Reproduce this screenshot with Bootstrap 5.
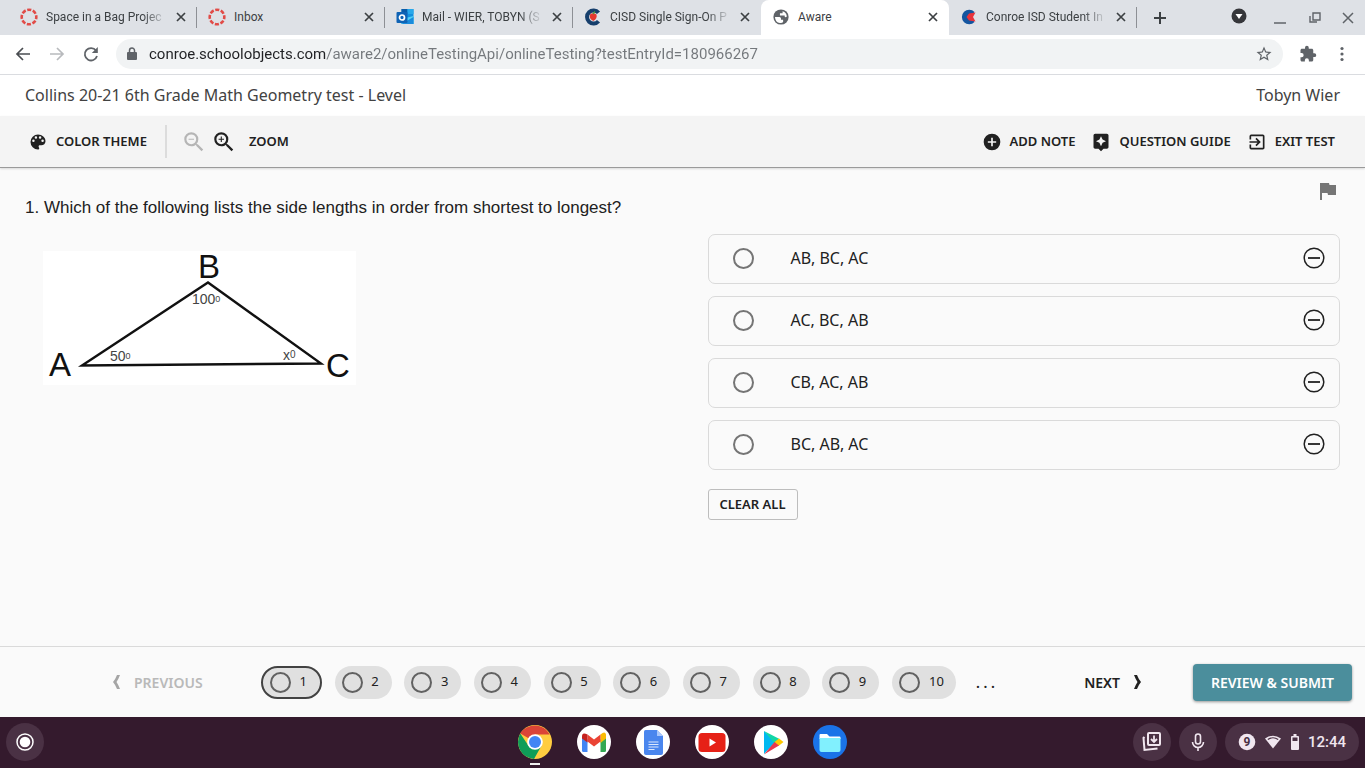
<!DOCTYPE html>
<html lang="en">
<head>
<meta charset="utf-8">
<meta name="viewport" content="width=device-width, initial-scale=1">
<title>Aware</title>
<link href="https://cdn.jsdelivr.net/npm/bootstrap@5.3.0/dist/css/bootstrap.min.css" rel="stylesheet">
<style>
  body { font-family: "Noto Sans", sans-serif; background: #fafafa; color: #212121; }
  svg { flex: none; display: block; }
  .bare { background: none; border: 0; padding: 0; color: inherit; font-weight: inherit; display: inline-flex; align-items: center; justify-content: center; text-decoration: none; }

  /* browser frame */
  .tabstrip { background: #dee1e6; height: 35px; padding-left: 9px; font: 12px/16px Roboto, sans-serif; color: #3c4043; }
  .tab { flex: 0 1 188px; min-width: 0; padding: 0 8px 2px 11px; position: relative; }
  .tab.split::after { content: ""; position: absolute; right: 0; top: 7px; bottom: 7px; width: 1px; background: #8d9095; }
  .tab.active { background: #fff; border-radius: 8px 8px 0 0; }
  .tab-title { flex: 1 1 0; min-width: 0; margin: 0 4px 0 8px; overflow: hidden; white-space: nowrap; color: inherit; text-decoration: none; }
  .tab-title.fade-end { -webkit-mask-image: linear-gradient(to right, #000 calc(100% - 26px), transparent calc(100% - 2px)); mask-image: linear-gradient(to right, #000 calc(100% - 26px), transparent calc(100% - 2px)); }
  .window-controls { padding: 0 11px 4px 0; }
  .urlbar { background: #fff; height: 40px; border-bottom: 1px solid #dadce0; padding: 0 14px 2px 14px; color: #5f6368; }
  .address { background: #f1f3f4; height: 30px; border-radius: 15px; padding: 0 10px 0 9px; }
  .address input { border: 0; outline: 0; padding: 0; margin-left: 10px; font: 15px/20px Roboto, sans-serif;
    background: linear-gradient(to right, #202124 177px, #74787c 177px); -webkit-background-clip: text; background-clip: text; -webkit-text-fill-color: transparent; }

  /* test header */
  .title-row { background: #fff; height: 41px; padding: 0 25px 2px; font-size: 16px; color: #424242; }
  .tools { background: #f4f4f4; height: 52px; padding: 0 30px 0 28px; border-bottom: 1px solid #9a9a9a; box-shadow: 0 1px 2px #0002; font-size: 13px; font-weight: 600; position: relative; }
  .tools .bare { gap: 8px; }
  .rule-v { width: 2px; height: 33px; background: #dcdcdc; margin: 0 14px 0 18px; }

  /* question */
  .question { padding: 0 25px; }
  .prompt { font: 17px/24px "Liberation Sans", Arial, sans-serif; margin: 28px 0 31px; }
  .figure-box { margin-left: 18px; overflow: visible; }
  .answers { padding: 12px 0 0 25px; }
  .choices { margin-top: 30px; gap: 12px; border: 0; padding: 0; }
  .choice { height: 50px; border: 1px solid #dadada; border-radius: 7px; padding: 0 14px 2px 24px; font-size: 16px; }
  .choice input { appearance: none; width: 21px; height: 21px; margin: 0; border: 2px solid #757575; border-radius: 50%; }
  .choice input:checked { background: #757575; }
  .choice label { margin-left: 37px; }
  .clear { height: 31px; margin-top: 19px; width: 90px; border: 1px solid #bdbdbd; border-radius: 3px; background: #fafafa; color: #212121; font-size: 13px; font-weight: 600; padding: 0; }

  /* pager */
  .pager { height: 71px; border-top: 1px solid #dadada; padding: 0 13px 0 112px; font-size: 14px; font-weight: 600; }
  .step-move { gap: 13px; }
  .step-move.previous { width: 94px; color: #b9b9b9; justify-content: flex-start; }
  .step-move.next { margin-right: 51px; }
  .steps { flex: 0 1 695px; margin-left: 55px; }
  .step { width: 57px; height: 33px; border: 0; border-radius: 17px; background: #e0e0e0; color: #212121; font-size: 13px; padding: 0 13px 0 7px; display: flex; align-items: center; justify-content: space-between; }
  .step::before { content: ""; width: 21px; height: 21px; border: 2px solid #616161; border-radius: 50%; }
  .step.current { width: 61px; border: 2px solid #424242; }
  .step.wide { width: 64px; padding-right: 12px; }
  .submit { height: 37px; width: 159px; border: 0; border-radius: 4px; background: #4b8e9c; color: #fff; font-weight: 600; box-shadow: 0 1px 3px #0006; padding: 0; }

  /* system shelf */
  .shelf { height: 51px; background: #341a2d; display: grid; grid-template-columns: 1fr auto 1fr; align-items: center; padding: 0 6px 1px; color: #f0e6ef; }
  .apps { gap: 25px; }
  .app-link { position: relative; display: block; }
  .app-link.running::after { content: ""; position: absolute; left: 12px; bottom: -6px; width: 10px; height: 2px; background: #eee; }
  .dot { width: 38px; height: 38px; border-radius: 19px; background: #4a3144; }
  .status { height: 38px; border-radius: 19px; background: #4a3144; padding: 0 13px; font: 500 15px/20px Roboto, sans-serif; }
</style>
</head>
<body class="min-vh-100 d-flex flex-column">

<svg width="0" height="0" class="position-absolute" aria-hidden="true">
  <symbol id="x" viewBox="0 0 16 16"><path d="M4 4l8 8M12 4l-8 8" stroke="#3c4043" stroke-width="1.7" fill="none"/></symbol>
  <symbol id="canvas" viewBox="0 0 18 18"><circle cx="9" cy="9" r="7.3" fill="none" stroke="#e14b47" stroke-width="2.6" stroke-dasharray="4.1 1.63" stroke-dashoffset="2"/></symbol>
  <symbol id="minus" viewBox="0 0 22 22"><circle cx="11" cy="11" r="9.8" fill="none" stroke="currentColor" stroke-width="1.5"/><path d="M5 11h12" stroke="currentColor" stroke-width="1.8"/></symbol>
</svg>

<header>
  <div class="tabstrip d-flex align-items-stretch">
    <div class="tab split d-flex align-items-center">
      <svg width="18" height="18"><use href="#canvas"/></svg>
      <a class="tab-title fade-end" href="#">Space in a Bag Projec</a>
      <button class="bare" aria-label="Close tab"><svg width="16" height="16"><use href="#x"/></svg></button>
    </div>
    <div class="tab split d-flex align-items-center">
      <svg width="18" height="18"><use href="#canvas"/></svg>
      <a class="tab-title" href="#">Inbox</a>
      <button class="bare" aria-label="Close tab"><svg width="16" height="16"><use href="#x"/></svg></button>
    </div>
    <div class="tab split d-flex align-items-center">
      <svg width="18" height="18" viewBox="0 0 17 18"><path d="M5 1h12v15H5z" fill="#1490df"/><path d="M5 1h6v5H5z" fill="#0a5ba8"/><path d="M11 1h6v5h-6z" fill="#28a8ea"/><path d="M5 11l12-3v8H5z" fill="#50d0f5"/><path d="M5 16l12-7v7z" fill="#1a8bdc"/><rect y="4" width="11" height="11" rx="1" fill="#0f63b5"/><circle cx="5.5" cy="9.5" r="2.5" fill="none" stroke="#fff" stroke-width="1.7"/></svg>
      <a class="tab-title fade-end" href="#">Mail - WIER, TOBYN (S</a>
      <button class="bare" aria-label="Close tab"><svg width="16" height="16"><use href="#x"/></svg></button>
    </div>
    <div class="tab d-flex align-items-center">
      <svg width="18" height="18" viewBox="0 0 18 18"><path d="M14.5 4.8A6.5 6.5 0 1 0 14.5 13.2" fill="none" stroke="#163f6c" stroke-width="4"/><path d="M6 6.5q3-2.5 6.5 0 1 4-3.200 6.500Q5 11 6 6.500Z" fill="#e5392f"/><path d="M9 6l2-2.500" stroke="#4c9a3c" stroke-width="1.300"/></svg>
      <a class="tab-title fade-end" href="#">CISD Single Sign-On P</a>
      <button class="bare" aria-label="Close tab"><svg width="16" height="16"><use href="#x"/></svg></button>
    </div>
    <div class="tab active d-flex align-items-center">
      <svg width="18" height="18" viewBox="0 0 17 17"><circle cx="8.500" cy="8.500" r="7.200" fill="#5f6368"/><path d="M2.800 8.500H7q1.500 0 1.500 1.500v1.200h2v2q-1 1.300-3 1Q3 13.500 2.800 8.500ZM10 3q3.800 1.200 4 5-1.200 1.300-2 .3V7H7.500V5H10Z" fill="#fff"/></svg>
      <a class="tab-title" href="#" aria-current="page">Aware</a>
      <button class="bare" aria-label="Close tab"><svg width="16" height="16"><use href="#x"/></svg></button>
    </div>
    <div class="tab split d-flex align-items-center">
      <svg width="18" height="18" viewBox="0 0 18 18"><path d="M14.500 4A7.300 7.300 0 1 0 14.500 14L11 9Z" fill="#1455a0"/><path d="M15.500 4.500L9 5.500 6.500 9 9 12.500l6.500 1L13 9Z" fill="#e8343c"/></svg>
      <a class="tab-title fade-end" href="#">Conroe ISD Student In</a>
      <button class="bare" aria-label="Close tab"><svg width="16" height="16"><use href="#x"/></svg></button>
    </div>
    <button class="bare ms-3" aria-label="New tab"><svg width="14" height="14" viewBox="0 0 14 14"><path d="M7 1v12M1 7h12" stroke="#3c4043" stroke-width="2"/></svg></button>
    <div class="window-controls d-flex align-items-center ms-auto gap-3">
      <button class="bare me-2" aria-label="Search tabs"><svg width="18" height="18" viewBox="0 0 18 18"><circle cx="9" cy="9" r="7.500" fill="#35363a"/><path d="M5.500 7h7L9 12Z" fill="#fff"/></svg></button>
      <button class="bare" aria-label="Minimize"><svg width="16" height="16" viewBox="0 0 16 16"><path d="M2 15h12" stroke="#5f6368" stroke-width="1.500"/></svg></button>
      <button class="bare ms-1" aria-label="Restore"><svg width="14" height="14" viewBox="0 0 14 14"><path d="M5 4h7v7H5zM2 7v6h7" fill="none" stroke="#5f6368" stroke-width="1.400"/></svg></button>
      <button class="bare ms-1" aria-label="Close window"><svg width="12" height="16" viewBox="0 0 12 16"><path d="M1 5l10 10M11 5L1 15" stroke="#5f6368" stroke-width="1.500"/></svg></button>
    </div>
  </div>
  <div class="urlbar d-flex align-items-center">
    <button class="bare" aria-label="Back"><svg width="18" height="18" viewBox="0 0 18 18"><path d="M16 9H3M9 3L3 9l6 6" fill="none" stroke="#4a4d51" stroke-width="1.700"/></svg></button>
    <button class="bare ms-3" aria-label="Forward"><svg width="18" height="18" viewBox="0 0 18 18"><path d="M2 9h13M9 3l6 6-6 6" fill="none" stroke="#b8babd" stroke-width="1.700"/></svg></button>
    <button class="bare ms-3" aria-label="Reload"><svg width="18" height="18" viewBox="0 0 18 18"><path d="M14 5.500A6.200 6.200 0 1 0 15 11" fill="none" stroke="#5f6368" stroke-width="1.800"/><path d="M15.800 2v6h-6Z" fill="#5f6368"/></svg></button>
    <div class="address d-flex align-items-center flex-fill ms-3">
      <svg width="14" height="16" viewBox="1 0 14 16"><path d="M4 6h8q1 0 1 1v6q0 1-1 1H4q-1 0-1-1V7q0-1 1-1Z" fill="#5f6368"/><path d="M5.500 6.500V4.500a2.500 2.500 0 0 1 5 0v2" fill="none" stroke="#5f6368" stroke-width="1.500"/></svg>
      <input class="flex-fill" type="text" aria-label="Address" value="conroe.schoolobjects.com/aware2/onlineTestingApi/onlineTesting?testEntryId=180966267">
      <button class="bare" aria-label="Bookmark"><svg width="18" height="18" viewBox="0 0 24 24"><path fill="#5f6368" d="M22 9.240l-7.190-.62L12 2 9.190 8.630 2 9.240l5.460 4.730L5.820 21 12 17.270 18.180 21l-1.630-7.030L22 9.240zM12 15.400l-3.760 2.270 1-4.280-3.320-2.880 4.380-.38L12 6.100l1.710 4.040 4.380.38-3.320 2.880 1 4.280L12 15.400z"/></svg></button>
    </div>
    <button class="bare ms-3" aria-label="Extensions"><svg width="18" height="18" viewBox="0 0 24 24"><path fill="#5f6368" d="M20.500 11H19V7c0-1.100-.9-2-2-2h-4V3.500a2.500 2.500 0 0 0-5 0V5H4c-1.100 0-2 .9-2 2v3.800h1.500a2.700 2.700 0 0 1 0 5.400H2V20c0 1.100.9 2 2 2h3.800v-1.500a2.700 2.700 0 0 1 5.400 0V22H17c1.100 0 2-.9 2-2v-4h1.500a2.500 2.500 0 0 0 0-5z"/></svg></button>
    <button class="bare ms-3" aria-label="Menu"><svg width="18" height="18" viewBox="0 0 18 18" fill="#5f6368"><circle cx="9" cy="3.500" r="1.600"/><circle cx="9" cy="9" r="1.600"/><circle cx="9" cy="14.500" r="1.600"/></svg></button>
  </div>
</header>

<main class="flex-fill d-flex flex-column">
  <div class="title-row d-flex align-items-center justify-content-between">
    <span>Collins 20-21 6th Grade Math Geometry test - Level</span><span>Tobyn Wier</span>
  </div>
  <div class="tools d-flex align-items-center">
    <button class="bare"><svg width="20" height="20" viewBox="0 0 24 24" fill="currentColor"><path d="M12 3a9 9 0 0 0 0 18c.83 0 1.500-.67 1.500-1.500 0-.39-.15-.74-.39-1.010-.23-.26-.38-.61-.38-.99 0-.83.67-1.500 1.500-1.500H16c2.760 0 5-2.240 5-5 0-4.420-4.030-8-9-8zm-5.500 9a1.500 1.500 0 1 1 0-3 1.500 1.500 0 0 1 0 3zm3-4a1.500 1.500 0 1 1 0-3 1.500 1.500 0 0 1 0 3zm5 0a1.500 1.500 0 1 1 0-3 1.500 1.500 0 0 1 0 3zm3 4a1.500 1.500 0 1 1 0-3 1.500 1.500 0 0 1 0 3z"/></svg>COLOR THEME</button>
    <span class="rule-v"></span>
    <button class="bare" disabled aria-label="Zoom out"><svg width="26" height="26" viewBox="0 0 24 24" fill="#b5b5b5"><path d="M15.500 14h-.79l-.28-.27A6.471 6.471 0 0 0 16 9.500 6.500 6.500 0 1 0 9.500 16c1.610 0 3.090-.59 4.230-1.570l.27.28v.79l5 4.990L20.490 19l-4.990-5zm-6 0a4.500 4.500 0 1 1 0-9 4.500 4.500 0 0 1 0 9zM7 9h5v1H7z"/></svg></button>
    <button class="bare ms-1"><svg width="26" height="26" viewBox="0 0 24 24" fill="currentColor"><path d="M15.500 14h-.79l-.28-.27A6.471 6.471 0 0 0 16 9.500 6.500 6.500 0 1 0 9.500 16c1.610 0 3.090-.59 4.230-1.570l.27.28v.79l5 4.990L20.490 19l-4.990-5zm-6 0a4.500 4.500 0 1 1 0-9 4.500 4.500 0 0 1 0 9zm2.500-4h-2v2H9v-2H7V9h2V7h1v2h2v1z"/></svg><span class="ps-1">ZOOM</span></button>
    <div class="d-flex align-items-center gap-3 ms-auto">
      <button class="bare"><svg width="20" height="20" viewBox="0 0 24 24" fill="currentColor"><path d="M12 2a10 10 0 1 0 0 20 10 10 0 0 0 0-20zm5 11h-4v4h-2v-4H7v-2h4V7h2v4h4v2z"/></svg>ADD NOTE</button>
      <button class="bare"><svg width="20" height="20" viewBox="0 0 24 24" fill="currentColor"><path d="M19 2H5a2 2 0 0 0-2 2v14c0 1.100.9 2 2 2h4l3 3 3-3h4c1.100 0 2-.9 2-2V4c0-1.100-.9-2-2-2zm-5.120 10.880L12 17l-1.880-4.120L6 11l4.120-1.880L12 5l1.880 4.120L18 11l-4.120 1.880z"/></svg>QUESTION GUIDE</button>
      <button class="bare"><svg width="20" height="20" viewBox="0 0 24 24" fill="currentColor"><path d="M10.090 15.590L11.500 17l5-5-5-5-1.410 1.410L12.670 11H3v2h9.670l-2.580 2.590zM19 3H5a2 2 0 0 0-2 2v4h2V5h14v14H5v-4H3v4a2 2 0 0 0 2 2h14c1.100 0 2-.9 2-2V5c0-1.100-.9-2-2-2z"/></svg>EXIT TEST</button>
    </div>
  </div>

  <div class="question row g-0 flex-fill">
    <section class="col-6">
      <p class="prompt text-nowrap">1. Which of the following lists the side lengths in order from shortest to longest?</p>
      <svg class="figure-box" width="313" height="134" viewBox="0 0 313 134" role="img" aria-label="Triangle ABC" font-family="Liberation Sans, Arial, sans-serif">
        <rect width="313" height="134" fill="#fff"/>
        <path d="M39 114.500L165 31.500 278 112.500Z" fill="none" stroke="#111" stroke-width="2.400"/>
        <g font-size="33" fill="#111"><text x="155" y="27">B</text><text x="6" y="125">A</text><text x="283" y="126">C</text></g>
        <g font-size="14" fill="#444"><text x="149" y="53">100<tspan font-size="9" dy="-2">0</tspan></text><text x="67" y="110">50<tspan font-size="9" dy="-2">0</tspan></text><text x="240" y="109">x<tspan font-size="10" dy="-2">0</tspan></text></g>
      </svg>
    </section>
    <section class="col-6 answers">
      <div class="d-flex justify-content-end"><button class="bare" aria-label="Flag question"><svg width="24" height="24" viewBox="0 0 24 24" fill="#757575"><path d="M13.500 5L13 3H4v17h2v-7h5.500l.5 2H20V5Z"/></svg></button></div>
      <fieldset class="choices d-flex flex-column">
        <div class="choice d-flex align-items-center"><input type="radio" name="a" id="a1"><label for="a1">AB, BC, AC</label><button class="bare ms-auto" aria-label="Eliminate AB, BC, AC"><svg width="22" height="22"><use href="#minus"/></svg></button></div>
        <div class="choice d-flex align-items-center"><input type="radio" name="a" id="a2"><label for="a2">AC, BC, AB</label><button class="bare ms-auto" aria-label="Eliminate AC, BC, AB"><svg width="22" height="22"><use href="#minus"/></svg></button></div>
        <div class="choice d-flex align-items-center"><input type="radio" name="a" id="a3"><label for="a3">CB, AC, AB</label><button class="bare ms-auto" aria-label="Eliminate CB, AC, AB"><svg width="22" height="22"><use href="#minus"/></svg></button></div>
        <div class="choice d-flex align-items-center"><input type="radio" name="a" id="a4"><label for="a4">BC, AB, AC</label><button class="bare ms-auto" aria-label="Eliminate BC, AB, AC"><svg width="22" height="22"><use href="#minus"/></svg></button></div>
      </fieldset>
      <button class="clear">CLEAR ALL</button>
    </section>
  </div>

  <nav class="pager d-flex align-items-center" aria-label="Questions">
    <button class="bare step-move previous" disabled><svg width="9" height="14" viewBox="0 0 9 14"><path d="M5 0H8Q6.500 4 4.500 7 6.500 10 8 14H5Q3.500 10 1 7 3.500 4 5 0Z" fill="#a5a5a5"/></svg>PREVIOUS</button>
    <div class="steps d-flex justify-content-between">
      <button class="step current" aria-current="step">1</button><button class="step">2</button><button class="step">3</button><button class="step">4</button><button class="step">5</button><button class="step">6</button><button class="step">7</button><button class="step">8</button><button class="step">9</button><button class="step wide">10</button>
    </div>
    <button class="bare ms-3 ps-1" aria-label="More questions">. . .</button>
    <button class="bare step-move next ms-auto">NEXT<svg width="9" height="14" viewBox="0 0 9 14"><path d="M4 0H1Q2.500 4 4.500 7 2.500 10 1 14H4Q5.500 10 8 7 5.500 4 4 0Z" fill="currentColor"/></svg></button>
    <button class="submit">REVIEW &amp; SUBMIT</button>
  </nav>
</main>

<footer class="shelf">
  <button class="bare dot" aria-label="Launcher"><svg width="20" height="20" viewBox="0 0 20 20"><circle cx="10" cy="10" r="8" fill="none" stroke="#fff" stroke-width="1.500"/><circle cx="10" cy="10" r="5.300" fill="#fff"/></svg></button>
  <nav class="apps d-flex" aria-label="Apps">
    <a class="app-link running" href="#" aria-label="Chrome"><svg width="34" height="34" viewBox="0 0 34 34"><circle cx="17" cy="17" r="17" fill="#ffcd40"/><path d="M17 17L2.300 8.500A17 17 0 0 1 31.700 9.500H17Z" fill="#db4437"/><path d="M2.300 8.500L10.500 20.700 17 25 16 34A17 17 0 0 1 2.300 8.500Z" fill="#0f9d58"/><path d="M16 34L23.500 20.700 17 24 11 21Z" fill="#0f9d58"/><circle cx="17" cy="17" r="7.800" fill="#fff"/><circle cx="17" cy="17" r="6" fill="#4285f4"/></svg></a>
    <a class="app-link" href="#" aria-label="Gmail"><svg width="34" height="34" viewBox="0 0 34 34"><circle cx="17" cy="17" r="17" fill="#fff"/><path d="M5 11l5.500 3.500V27H6.500Q5 27 5 25.500Z" fill="#4285f4"/><path d="M29 11l-5.500 3.500V27h4Q29 27 29 25.500Z" fill="#34a853"/><path d="M23.500 9.500Q28 5.500 29 9.500V13.500L23.500 18Z" fill="#fbbc04"/><path d="M10.500 9.500L17 14.500 23.500 9.500V16.500L17 21.500 10.500 16.500Z" fill="#ea4335"/><path d="M5 11.500Q5 6.500 10.500 9.500V17.500L5 13.500Z" fill="#c5221f"/></svg></a>
    <a class="app-link" href="#" aria-label="Docs"><svg width="34" height="34" viewBox="0 0 34 34"><circle cx="17" cy="17" r="17" fill="#fff"/><path d="M9.500 5H21l6 6v17q0 2-2 2H10q-2 0-2-2V6.500Q8 5 9.500 5Z" fill="#4a86ee"/><path d="M21 5l6 6h-6Z" fill="#a9c7fb"/><path d="M12.500 17h10M12.500 19.500h10M12.500 22h10M12.500 24.500h6" stroke="#dce8fd" stroke-width="1.200"/></svg></a>
    <a class="app-link" href="#" aria-label="YouTube"><svg width="34" height="34" viewBox="0 0 34 34"><circle cx="17" cy="17" r="17" fill="#fff"/><rect x="3.500" y="8" width="27" height="19" rx="3.500" fill="#e62117"/><path d="M14.500 13.500v8l6.500-4Z" fill="#fff"/></svg></a>
    <a class="app-link" href="#" aria-label="Play Store"><svg width="34" height="34" viewBox="0 0 34 34"><circle cx="17" cy="17" r="17" fill="#fff"/><path d="M10 6v23L21.500 17Z" fill="#00b8f0"/><path d="M10 6l15.500 8-4.500 5Z" fill="#12d6a6"/><path d="M25 13.500l4.500 3.500-5 4-4-4Z" fill="#ffc800"/><path d="M10 29.500l15-9-4.500-3.500Z" fill="#e8384f"/></svg></a>
    <a class="app-link" href="#" aria-label="Files"><svg width="34" height="34" viewBox="0 0 34 34"><circle cx="17" cy="17" r="17" fill="#1a73e8"/><path d="M7.500 9H14l2.500 2.500h10q1 0 1 1V14h-21v-4Q6.500 9 7.500 9Z" fill="#fff"/><path d="M6.500 13h21v12q0 2-2 2h-17q-2 0-2-2Z" fill="#81f0fe"/></svg></a>
  </nav>
  <div class="d-flex justify-content-end gap-2">
    <button class="bare dot" aria-label="Holding space"><svg width="22" height="22" viewBox="0 0 22 22" fill="none" stroke="currentColor" stroke-width="2"><rect x="7" y="2" width="12" height="12" rx="1"/><path d="M3.500 6L2.500 7l1 12 13-1.500"/><path d="M13 4.500v6M10 8l3 3 3-3" stroke-width="1.800"/></svg></button>
    <button class="bare dot" aria-label="Dictation"><svg width="20" height="20" viewBox="0 0 20 20" fill="none" stroke="currentColor" stroke-width="1.600"><rect x="7.500" y="2" width="5" height="10" rx="2.500"/><path d="M4.500 10a5.500 5.500 0 0 0 11 0M10 15.500V19"/></svg></button>
    <button class="bare status gap-2"><svg width="18" height="18" viewBox="0 0 18 18"><circle cx="9" cy="9" r="8.300" fill="currentColor"/><text x="9" y="13" font-size="12" font-weight="700" text-anchor="middle" fill="#4a3144">9</text></svg><svg width="18" height="16" viewBox="0 0 16 16"><path d="M0 4.500Q8-1 16 4.500L8 14.500Z" fill="currentColor"/><path d="M2.800 5.500Q8 2 13.200 5.500" stroke="#4a3144" stroke-width="1.200" fill="none"/></svg><svg width="10" height="16" viewBox="0 0 10 16"><path d="M3.500 0h3v2H8q1 0 1 1v12q0 1-1 1H2q-1 0-1-1V3q0-1 1-1h1.500Z" fill="currentColor"/><path d="M2.500 3.500h5V7h-5Z" fill="#4a3144"/></svg><span>12:44</span></button>
  </div>
</footer>
<script src="https://cdn.jsdelivr.net/npm/bootstrap@5.3.0/dist/js/bootstrap.bundle.min.js"></script>
</body>
</html>
